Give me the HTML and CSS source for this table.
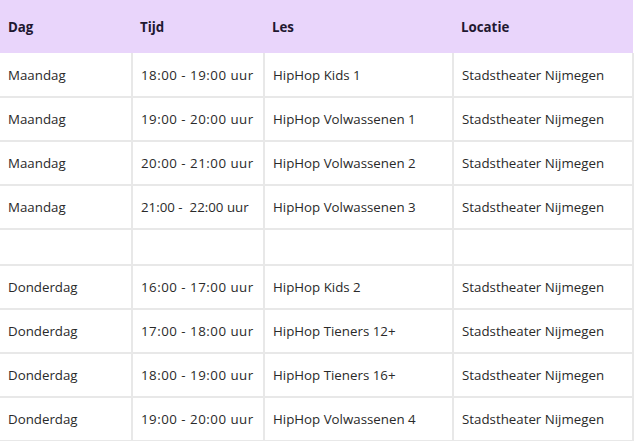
FILE: index.html
```html
<!DOCTYPE html>
<html lang="nl">
<head>
<meta charset="utf-8">
<title>Rooster</title>
<link rel="stylesheet" href="styles.css">
</head>
<body>
<table class="schedule">
  <colgroup>
    <col class="c-day">
    <col class="c-time">
    <col class="c-les">
    <col class="c-loc">
  </colgroup>
  <thead>
    <tr><th>Dag</th><th>Tijd</th><th>Les</th><th>Locatie</th></tr>
  </thead>
  <tbody>
    <tr><td>Maandag</td><td class="time">18:00 - 19:00 uur</td><td>HipHop Kids 1</td><td>Stadstheater Nijmegen</td></tr>
    <tr><td>Maandag</td><td class="time">19:00 - 20:00 uur</td><td>HipHop Volwassenen 1</td><td>Stadstheater Nijmegen</td></tr>
    <tr><td>Maandag</td><td class="time">20:00 - 21:00 uur</td><td>HipHop Volwassenen 2</td><td>Stadstheater Nijmegen</td></tr>
    <tr><td>Maandag</td><td class="time time-tight">21:00 -&nbsp; 22:00 uur</td><td>HipHop Volwassenen 3</td><td>Stadstheater Nijmegen</td></tr>
    <tr class="spacer"><td></td><td></td><td></td><td></td></tr>
    <tr><td>Donderdag</td><td class="time">16:00 - 17:00 uur</td><td>HipHop Kids 2</td><td>Stadstheater Nijmegen</td></tr>
    <tr><td>Donderdag</td><td class="time">17:00 - 18:00 uur</td><td>HipHop Tieners 12+</td><td>Stadstheater Nijmegen</td></tr>
    <tr><td>Donderdag</td><td class="time">18:00 - 19:00 uur</td><td>HipHop Tieners 16+</td><td>Stadstheater Nijmegen</td></tr>
    <tr><td>Donderdag</td><td class="time">19:00 - 20:00 uur</td><td>HipHop Volwassenen 4</td><td>Stadstheater Nijmegen</td></tr>
  </tbody>
</table>
</body>
</html>
```
FILE: styles.css
```css
html, body {
  margin: 0;
  padding: 0;
  background: #ffffff;
}
body {
  font-family: "Open Sans", "Noto Sans", sans-serif;
  color: #2a2a2a;
  overflow: hidden;
}
.schedule {
  width: 633px;
  border-collapse: collapse;
  table-layout: fixed;
  font-size: 13.3px;
}
.c-day { width: 132px; }
.c-time { width: 132px; }
.c-les { width: 189px; }
.c-loc { width: 180px; }
.schedule th {
  background: #e9d5fb;
  height: 53px;
  padding: 0 8px;
  text-align: left;
  font-weight: 700;
  color: #1f1830;
  border: none;
  box-sizing: border-box;
}
.schedule td {
  height: 44px;
  padding: 0 8px;
  border: 2px solid #e8e8e8;
  white-space: nowrap;
  box-sizing: border-box;
}
.schedule td.time {
  letter-spacing: 0.5px;
}
.schedule td.time-tight {
  letter-spacing: 0;
}
.schedule tr td:first-child {
  border-left: none;
}
.schedule tbody tr:first-child td {
  border-top: none;
}
.schedule .spacer td {
  height: 36px;
}
```
